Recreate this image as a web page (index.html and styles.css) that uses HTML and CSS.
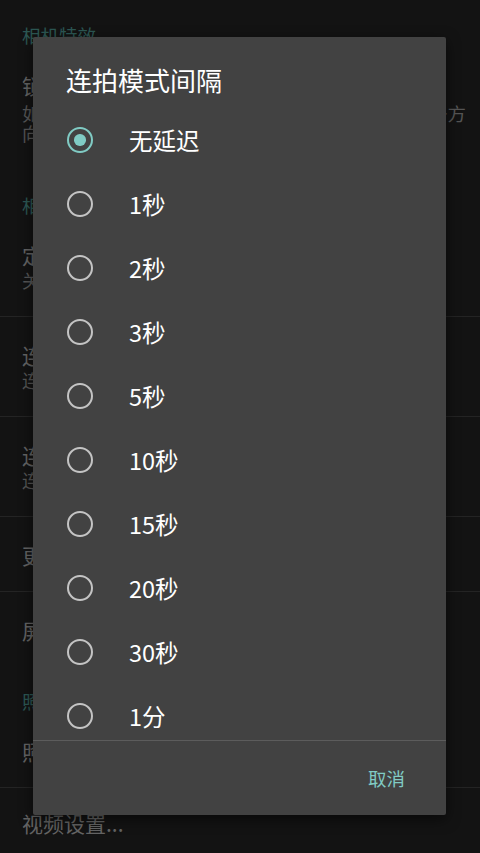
FILE: index.html
```html
<!DOCTYPE html>
<html lang="zh-CN">
<head>
<meta charset="utf-8">
<title>连拍模式间隔</title>
<link rel="stylesheet" href="styles.css">
</head>
<body>
<div class="screen">
  <div class="prefs">
    <div class="cat cat-first">相机特效</div>
    <div class="pref pref-lock">
      <div class="p-title">锁定照片方向</div>
      <div class="p-sub sub-lock">如果启用，照片将始终保存为指定的方向，而非设备方<br>向旋转后的方向</div>
    </div>
    <div class="cat">相机控制</div>
    <div class="pref two">
      <div class="p-title">定时器</div>
      <div class="p-sub">关闭</div>
    </div>
    <div class="pref two">
      <div class="p-title">连拍模式</div>
      <div class="p-sub">连拍模式拍摄的照片数量</div>
    </div>
    <div class="pref two">
      <div class="p-title">连拍模式间隔</div>
      <div class="p-sub">连拍模式中照片之间的延迟</div>
    </div>
    <div class="pref one">
      <div class="p-title">更多相机控制...</div>
    </div>
    <div class="pref one no-line">
      <div class="p-title">屏幕上的图形界面...</div>
    </div>
    <div class="cat">照片和视频</div>
    <div class="pref one">
      <div class="p-title">照片设置...</div>
    </div>
    <div class="pref one no-line last">
      <div class="p-title">视频设置...</div>
    </div>
  </div>

  <div class="dialog">
    <div class="d-title">连拍模式间隔</div>
    <div class="d-list">
      <div class="opt"><span class="radio checked"></span><span class="opt-label">无延迟</span></div>
      <div class="opt"><span class="radio"></span><span class="opt-label">1秒</span></div>
      <div class="opt"><span class="radio"></span><span class="opt-label">2秒</span></div>
      <div class="opt"><span class="radio"></span><span class="opt-label">3秒</span></div>
      <div class="opt"><span class="radio"></span><span class="opt-label">5秒</span></div>
      <div class="opt"><span class="radio"></span><span class="opt-label">10秒</span></div>
      <div class="opt"><span class="radio"></span><span class="opt-label">15秒</span></div>
      <div class="opt"><span class="radio"></span><span class="opt-label">20秒</span></div>
      <div class="opt"><span class="radio"></span><span class="opt-label">30秒</span></div>
      <div class="opt"><span class="radio"></span><span class="opt-label">1分</span></div>
    </div>
    <div class="d-buttons">
      <span class="d-btn">取消</span>
    </div>
  </div>
</div>
</body>
</html>
```
FILE: styles.css
```css
html, body {
  margin: 0;
  padding: 0;
}
body {
  background: #131313;
  font-family: "Noto Sans CJK SC", "Noto Sans", Roboto, sans-serif;
  width: 480px;
  height: 853px;
  overflow: hidden;
}
.screen {
  position: relative;
  width: 480px;
  height: 853px;
  overflow: hidden;
}

/* dimmed preference list underneath */
.prefs {
  display: flex;
  flex-direction: column;
}
.cat {
  padding: 24px 22px 1px;
  font-size: 18.5px;
  line-height: 22px;
  color: #2c5753;
  white-space: nowrap;
}
.cat-first {
  padding-top: 24px;
}
.pref {
  padding: 26px 22px 26px;
  border-bottom: 1px solid #242424;
  white-space: nowrap;
}
.pref.no-line {
  border-bottom: none;
}
.pref-lock {
  padding-bottom: 27px;
  border-bottom: none;
}
.pref.one {
  padding-top: 26px;
  padding-bottom: 24px;
}
.pref.last {
  padding-top: 23px;
}
.p-title {
  font-size: 21px;
  line-height: 24px;
  color: #646464;
}
.p-sub {
  margin-top: 3px;
  font-size: 18.5px;
  line-height: 20px;
  color: #555555;
}
.sub-lock {
  margin-top: 6px;
}

/* dialog */
.dialog {
  position: absolute;
  left: 33px;
  top: 37px;
  width: 413px;
  height: 778px;
  background: #424242;
  border-radius: 2px;
  box-shadow: 0 4px 14px rgba(0, 0, 0, 0.55);
  display: flex;
  flex-direction: column;
}
.d-title {
  padding: 27px 33px 0;
  font-size: 26px;
  line-height: 32px;
  color: #ffffff;
}
.d-list {
  margin-top: 12px;
  height: 632px;
  overflow: hidden;
  border-bottom: 1px solid #5c5c5c;
}
.opt {
  height: 64px;
  display: flex;
  align-items: center;
}
.radio {
  box-sizing: border-box;
  width: 26px;
  height: 26px;
  margin-left: 34px;
  border: 2.7px solid #c4c4c4;
  border-radius: 50%;
  display: flex;
  align-items: center;
  justify-content: center;
  flex: none;
}
.radio.checked {
  border-color: #80cbc4;
}
.radio.checked::after {
  content: "";
  width: 11.5px;
  height: 11.5px;
  border-radius: 50%;
  background: #80cbc4;
}
.opt-label {
  margin-left: 36px;
  font-size: 23.5px;
  line-height: 30px;
  color: #ffffff;
}
.d-buttons {
  flex: 1;
  display: flex;
  justify-content: flex-end;
  align-items: center;
  padding-right: 30px;
}
.d-btn {
  padding: 0 11px;
  font-size: 18.5px;
  line-height: 24px;
  color: #80cbc4;
}
```
